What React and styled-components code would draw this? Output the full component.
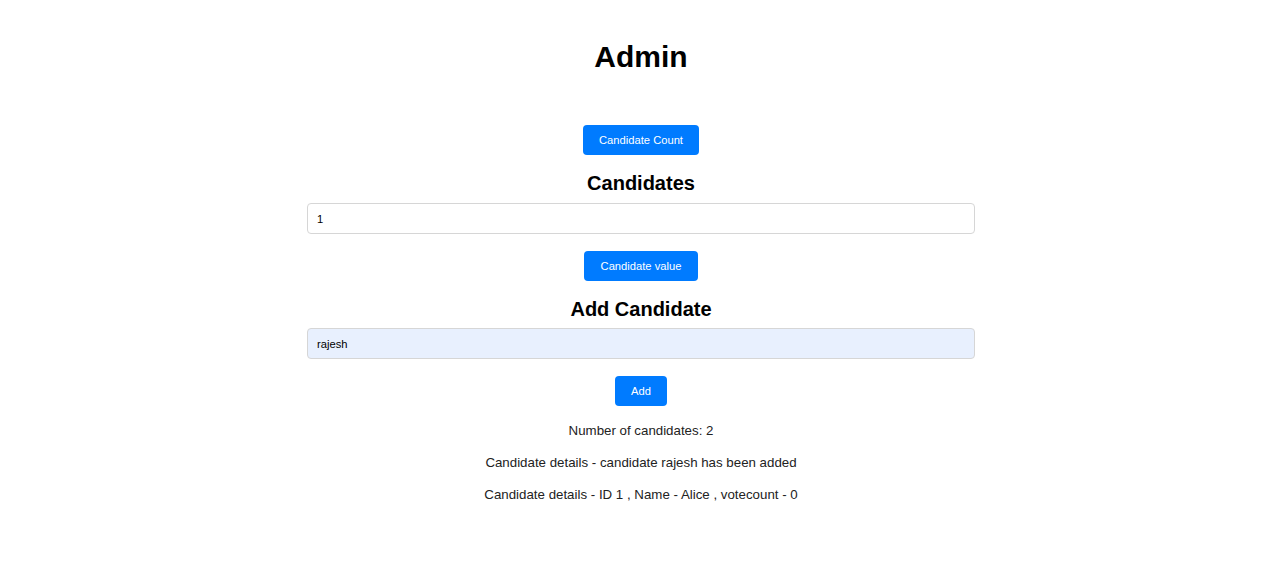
import styled, { createGlobalStyle } from "styled-components";

const GlobalStyle = createGlobalStyle`
    html, body {
        margin: 0;
        padding: 0;
        background: #ffffff;
        font-family: "Liberation Sans", Arial, sans-serif;
        color: #000;
    }
`;

const Page = styled.div`
    display: flex;
    flex-direction: column;
    align-items: center;
    padding-top: 38px;
    padding-left: 2px;
`;

const Title = styled.h1`
    margin: 0 0 50px;
    font-size: 30px;
    line-height: 37px;
    font-weight: 700;
`;

const Section = styled.div`
    width: 668px;
    display: flex;
    flex-direction: column;
    align-items: center;
`;

const Heading = styled.h2`
    margin: ${props => props.top}px 0 ${props => props.bottom}px;
    font-size: 20px;
    line-height: 24px;
    font-weight: 700;
`;

const Field = styled.input`
    box-sizing: border-box;
    width: 100%;
    height: 31px;
    padding: 0 9px;
    border: 1px solid #d6d6d6;
    border-radius: 4px;
    background: ${props => props.filled ? "#e8f0fe" : "#fff"};
    font-family: "Liberation Sans", Arial, sans-serif;
    font-size: 11.2px;
    color: #000;
    outline: none;
`;

const Button = styled.button`
    height: 30px;
    margin-top: ${props => props.top || 0}px;
    padding: 0 16.5px;
    border: none;
    border-radius: 4px;
    background: #007bff;
    color: #fff;
    font-family: "Liberation Sans", Arial, sans-serif;
    font-size: 11.2px;
    cursor: pointer;
`;

const Info = styled.p`
    margin: 0;
    font-size: 13.3px;
    line-height: 32px;
    color: #222;
    text-align: center;
`;

const Results = styled.div`
    margin-top: 9px;
    display: flex;
    flex-direction: column;
    align-items: center;
`;

export default function App() {
    return (
        <>
            <GlobalStyle />
            <Page>
                <Title>Admin</Title>
                <Section>
                    <Button>Candidate Count</Button>
                    <Heading top={16} bottom={8}>Candidates</Heading>
                    <Field defaultValue="1" />
                    <Button top={17}>Candidate value</Button>
                    <Heading top={16} bottom={7}>Add Candidate</Heading>
                    <Field filled defaultValue="rajesh" />
                    <Button top={17}>Add</Button>
                </Section>
                <Results>
                    <Info>Number of candidates: 2</Info>
                    <Info>Candidate details - candidate rajesh has been added</Info>
                    <Info>Candidate details - ID 1 , Name - Alice , votecount - 0</Info>
                </Results>
            </Page>
        </>
    );
}
